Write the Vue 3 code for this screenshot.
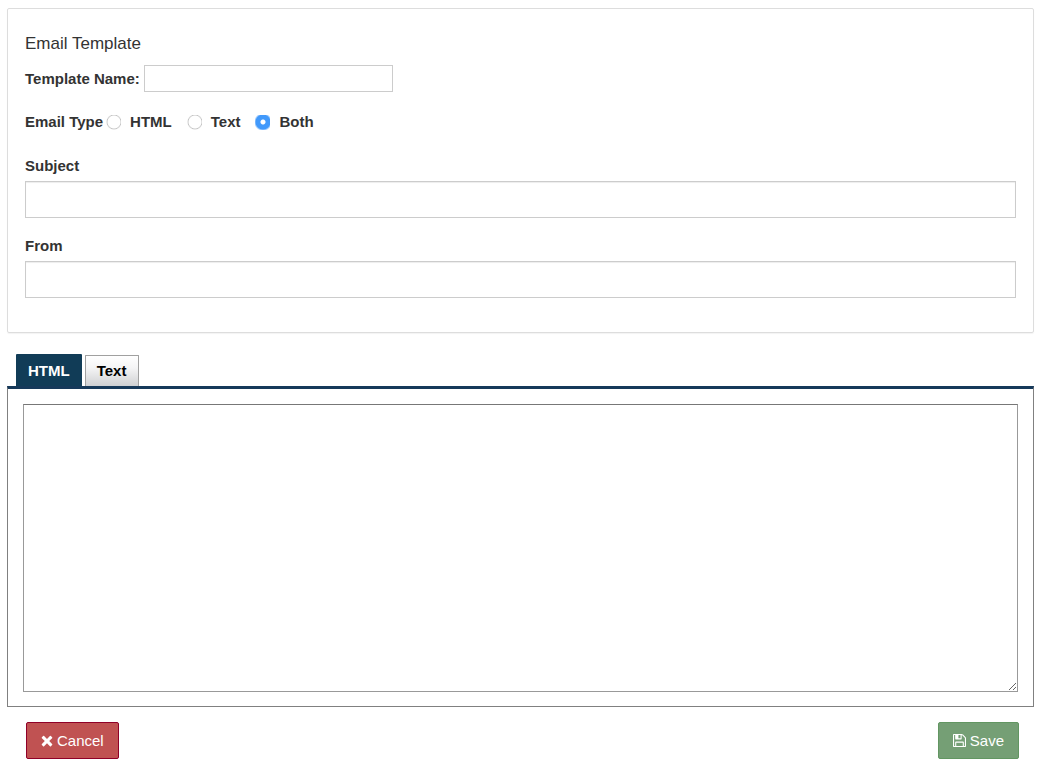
<script setup>
import { ref } from 'vue'

const types = ['HTML', 'Text', 'Both']
const tabs = ['HTML', 'Text']
const name = ref('')
const type = ref('Both')
const subject = ref('')
const from = ref('')
const activeTab = ref('HTML')
const bodies = ref({ HTML: '', Text: '' })
</script>

<template>
  <form class="page" @submit.prevent>
    <section class="panel">
      <h1 class="title">Email Template</h1>
      <div class="name-row">
        <label for="template-name">Template Name:</label>
        <input id="template-name" v-model="name" class="field name-field" type="text" />
      </div>
      <div class="type-row" role="radiogroup" aria-labelledby="type-label">
        <span id="type-label" class="type-label">Email Type</span>
        <label v-for="t in types" :key="t" class="option">
          <input v-model="type" class="radio" type="radio" name="email-type" :value="t" />
          {{ t }}
        </label>
      </div>
      <div class="group">
        <label for="subject">Subject</label>
        <input id="subject" v-model="subject" class="field wide" type="text" />
      </div>
      <div class="group">
        <label for="from">From</label>
        <input id="from" v-model="from" class="field wide" type="text" />
      </div>
    </section>

    <div class="tabs" role="tablist">
      <button
        v-for="t in tabs"
        :key="t"
        type="button"
        role="tab"
        class="tab"
        :class="{ active: activeTab === t }"
        :aria-selected="activeTab === t"
        @click="activeTab = t"
      >{{ t }}</button>
    </div>
    <div class="editor" role="tabpanel">
      <textarea v-model="bodies[activeTab]" class="body" :aria-label="activeTab"></textarea>
    </div>

    <div class="actions">
      <button type="button" class="btn cancel">
        <svg class="x-icon" viewBox="0 0 12 12" aria-hidden="true">
          <path d="M3.1 1 6 3.9 8.900 1q.5-.5 1 0l1.200 1.200q.5.5 0 1L8.200 6.100l2.900 2.900q.5.5 0 1l-1.200 1.200q-.5.5-1 0L6 8.300l-2.900 2.900q-.5.5-1 0L.9 10q-.5-.5 0-1l2.900-2.900L.9 3.200q-.5-.5 0-1L2.100 1q.5-.5 1 0z" fill="#fff" />
        </svg>
        Cancel
      </button>
      <button type="submit" class="btn save">
        <svg class="save-icon" viewBox="0 0 1536 1536" aria-hidden="true">
          <path fill="#fff" d="M384 1408h768v-384H384v384zm896 0h128V512q0-14-10-38.500t-20-34.500l-281-281q-10-10-34-20t-39-10v416q0 40-28 68t-68 28H352q-40 0-68-28t-28-68V128H128v1280h128V992q0-40 28-68t68-28h832q40 0 68 28t28 68v416zM896 480V160q0-13-9.500-22.500T864 128H672q-13 0-22.500 9.500T640 160v320q0 13 9.500 22.500T672 512h192q13 0 22.500-9.500T896 480zm640 32v928q0 40-28 68t-68 28H96q-40 0-68-28t-28-68V96q0-40 28-68T96 0h928q40 0 88 20t76 48l280 280q28 28 48 76t20 88z" />
        </svg>
        Save
      </button>
    </div>
  </form>
</template>

<style>
body {
  margin: 0;
  background: #fff;
}
</style>

<style scoped>
.page,
.page * {
  box-sizing: border-box;
}
.page {
  padding: 8px 6px 10px 7px;
  font: 15px/20px "Liberation Sans", Arial, sans-serif;
  color: #333;
}
.panel {
  padding: 23px 17px 34px;
  border: 1px solid #ddd;
  border-radius: 2px;
  box-shadow: 0 1px 1px rgba(0, 0, 0, 0.05);
}
.title {
  margin: 0 0 9px;
  font-size: 17px;
  line-height: 24px;
  font-weight: 400;
}
label,
.type-label {
  font-weight: 700;
}
.field {
  display: block;
  margin: 0;
  padding: 0 10px;
  border: 1px solid #ccc;
  background: #fff;
  font: inherit;
  color: #333;
}
.name-row {
  display: flex;
  align-items: center;
  gap: 4px;
}
.name-field {
  width: 249px;
  height: 27px;
  padding: 0 4px;
}
.type-row {
  display: flex;
  align-items: center;
  height: 28px;
  margin: 16px 0 20px;
}
.type-label {
  margin-right: 3px;
}
.option {
  display: flex;
  align-items: center;
  gap: 9px;
  margin-right: 15px;
}
.radio {
  appearance: none;
  width: 15px;
  height: 15px;
  margin: 0;
  background: radial-gradient(circle at 8px 7px, #fff 0 6px, #c4c4c4 7px, #d4d4d4 7px, transparent 8px);
}
.radio:checked {
  background: radial-gradient(circle at 8px 7px, #fff 0 2px, #4199fb 3px 7px, transparent 9px);
}
.group label {
  display: block;
  margin-bottom: 5px;
}
.group + .group {
  margin-top: 18px;
}
.wide {
  width: 100%;
  height: 37px;
  box-shadow: inset 0 1px 1px rgba(0, 0, 0, 0.075);
}
.tabs {
  display: flex;
  align-items: flex-end;
  gap: 3px;
  margin-top: 21px;
  padding-left: 9px;
}
.tab {
  height: 31px;
  margin: 0;
  padding: 0 12px 0 11px;
  border: 1px solid #a0a0a0;
  border-bottom: 0;
  border-radius: 1px 1px 0 0;
  background: linear-gradient(#fff 0%, #f4f4f5 40%, #d0d1d3 100%);
  font: 700 15px/20px "Liberation Sans", Arial, sans-serif;
  color: #000;
}
.tab.active {
  height: 32px;
  padding: 2px 12px 0;
  border: 0;
  background: #113c57;
  color: #fff;
}
.editor {
  padding: 15px 15px 14px;
  border: 1px solid #808080;
  border-top: 3px solid #16395a;
}
.body {
  display: block;
  width: 100%;
  height: 288px;
  margin: 0;
  padding: 4px;
  border: 1px solid #999;
  border-top-color: #777;
  background: #fff;
  font: inherit;
  resize: vertical;
}
.actions {
  display: flex;
  justify-content: space-between;
  padding: 15px 15px 0 19px;
}
.btn {
  display: flex;
  align-items: center;
  height: 37px;
  margin: 0;
  padding: 0 14px;
  border: 1px solid;
  border-radius: 2px;
  font: 15px/20px "Liberation Sans", Arial, sans-serif;
  color: #fff;
}
.cancel {
  gap: 4px;
  border-color: #900028;
  background: #c05252;
}
.save {
  gap: 4px;
  border-color: #629662;
  background: #759f75;
}
.x-icon {
  width: 12px;
  height: 12px;
}
.save-icon {
  width: 13px;
  height: 13px;
}
</style>
